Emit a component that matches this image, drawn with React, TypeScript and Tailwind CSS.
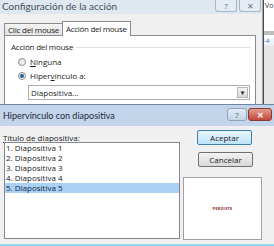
import { FC, ReactNode } from "react";

const slides = [
    "1. Diapositiva 1",
    "2. Diapositiva 2",
    "3. Diapositiva 3",
    "4. Diapositiva 4",
    "5. Diapositiva 5",
];

const Radio: FC<{ checked?: boolean }> = ({ checked }): ReactNode => (
    <span className="w-[8px] h-[8px] rounded-full border border-[#8e8f8f] bg-linear-to-br from-[#dcdcdc] to-[#fbfbfb] flex items-center justify-center">
        {checked && <span className="w-[4px] h-[4px] rounded-full bg-[#1f5f9e]" />}
    </span>
);

const App: FC = (): ReactNode => {
    return (
        <div className="relative w-[274px] h-[246px] overflow-hidden bg-white font-['Open_Sans','Liberation_Sans',sans-serif] text-[#1b1b1b]">
            {/* Window behind, right edge */}
            <div className="absolute left-[263px] top-0 w-[11px] h-[104px] bg-white border-l border-[#4a4a4a] flex flex-col">
                <span className="text-[7px] leading-[12px] pl-px text-[#333]">Vo</span>
                <div className="mt-[19px] h-[4px] bg-[#bdbdbd]" />
                <div className="mt-[3px] h-[7px] bg-[#eef4fb] text-[6px] leading-[7px] text-[#3a6aa8]">-4</div>
                <div className="flex-1 bg-[#e6e6e6]" />
            </div>

            {/* Back dialog: Configuración de la acción */}
            <div className="absolute left-0 top-0 w-[263px] h-[104px] bg-[#dfe7f0] border-r border-[#97a5b5] flex flex-col">
                <div className="h-[14px] flex items-start shrink-0">
                    <span className="pl-[2px] font-['Lato',sans-serif] text-[10px] leading-[13px] text-[#4a4f57]">Configuración de la acción</span>
                    <div className="ml-auto mr-[1px] flex gap-[2px]">
                        <div className="w-[22px] h-[12px] rounded-b-[3px] border border-t-0 border-[#a9b6c6] bg-[#e4ebf3] flex items-center justify-center text-[8px] leading-none text-[#6a7584]">?</div>
                        <div className="w-[22px] h-[12px] rounded-b-[3px] border border-t-0 border-[#a9b6c6] bg-[#e4ebf3] flex items-center justify-center text-[8px] leading-none text-[#6a7584]">✕</div>
                    </div>
                </div>
                <div className="flex-1 bg-[#f0f0f0] px-[4px] pt-[6px] flex flex-col">
                    {/* Tabs */}
                    <div className="flex items-end h-[15px]">
                        <div className="w-[59px] h-[12px] border border-b-0 border-[#898c95] bg-linear-to-b from-[#f4f4f4] to-[#e2e2e2] text-[8px] leading-[11px] pl-[3px] whitespace-nowrap tracking-[-0.2px]">
                            Clic del mouse
                        </div>
                        <div className="w-[69px] h-[15px] -ml-px border border-b-0 border-[#898c95] bg-white text-[8px] leading-[13px] pl-[3px] relative -mb-px z-10 whitespace-nowrap tracking-[-0.3px]">
                            Acción del mouse
                        </div>
                    </div>
                    {/* Panel */}
                    <div className="w-[252px] flex-1 border border-b-0 border-[#898c95] bg-white flex flex-col pl-[6px]">
                        <div className="mt-[6px] h-[10px] flex items-center">
                            <span className="text-[8px] leading-[10px] tracking-[-0.2px]">Acción del mouse</span>
                            <div className="ml-[3px] mr-[5px] flex-1 h-px bg-[#d5dfe5]" />
                        </div>
                        <div className="mt-[5px] h-[10px] flex items-center pl-[7px] gap-[4px]">
                            <Radio />
                            <span className="text-[8px] leading-[10px]">
                                <span className="underline">N</span>inguna
                            </span>
                        </div>
                        <div className="mt-[4px] h-[10px] flex items-center pl-[7px] gap-[4px]">
                            <Radio checked />
                            <span className="text-[8px] leading-[10px]">
                                Hiper<span className="underline">v</span>ínculo a:
                            </span>
                        </div>
                        <div className="mt-[4px] ml-[17px] w-[222px] h-[15px] border border-[#abadb3] bg-white flex items-center">
                            <span className="pl-[2px] text-[8px] leading-[13px]">Diapositiva...</span>
                            <div className="ml-auto mr-[1px] w-[11px] h-[11px] border border-[#b5b5b5] bg-linear-to-b from-[#f2f2f2] to-[#d8d8d8] flex items-center justify-center text-[6px] leading-none">
                                ▼
                            </div>
                        </div>
                    </div>
                </div>
            </div>

            {/* Front dialog: Hipervínculo con diapositiva */}
            <div className="absolute left-0 top-[104px] w-[274px] h-[142px] flex flex-col border-t border-[#6f86a3] bg-linear-to-b from-[#c2d4ea] to-[#cddcee]">
                <div className="h-[21px] flex items-start shrink-0">
                    <span className="pl-[3px] font-['Lato',sans-serif] text-[9px] leading-[21px] text-[#1e2a3a]">Hipervínculo con diapositiva</span>
                    <div className="ml-auto mr-[2px] mt-[3px] flex gap-px">
                        <div className="w-[20px] h-[13px] rounded-[3px] border border-[#8ea3bd] bg-linear-to-b from-[#e3ecf7] to-[#c4d4e8] flex items-center justify-center text-[8px] leading-none text-[#54657c]">?</div>
                        <div className="w-[24px] h-[13px] rounded-[3px] border border-[#8e3b33] bg-linear-to-b from-[#e39a8c] to-[#c4463a] flex items-center justify-center text-[8px] font-bold leading-none text-white">✕</div>
                    </div>
                </div>
                <div className="flex-1 bg-[#f0f0f0] flex">
                    {/* Slide list */}
                    <div className="w-[183px] pl-[3px] pt-[7px] flex flex-col shrink-0">
                        <span className="h-[9px] text-[8px] leading-[9px]">
                            <span className="underline">T</span>ítulo de diapositiva:
                        </span>
                        <div className="ml-px w-[176px] h-[97px] border border-[#828790] bg-white flex flex-col">
                            {slides.map((s, i) => (
                                <div
                                    key={s}
                                    className={
                                        i === 4
                                            ? "h-[10px] text-[8px] leading-[10px] pl-px bg-[#a9d1f5] text-[#10253f]"
                                            : "h-[10px] text-[8px] leading-[10px] pl-px"
                                    }
                                >
                                    {s}
                                </div>
                            ))}
                        </div>
                    </div>
                    {/* Buttons and preview */}
                    <div className="flex flex-col pt-[4px]">
                        <div className="ml-[14px] w-[55px] h-[15px] rounded-[2px] border border-[#3c7fb1] bg-linear-to-b from-[#eaf6fd] to-[#bee4f8] flex items-center justify-center text-[8px] leading-none">
                            Aceptar
                        </div>
                        <div className="ml-[15px] mt-[7px] w-[55px] h-[15px] rounded-[2px] border border-[#707070] bg-linear-to-b from-[#f3f3f3] to-[#d9d9d9] flex items-center justify-center text-[8px] leading-none">
                            Cancelar
                        </div>
                        <div className="mt-[10px] w-[79px] h-[63px] border border-[#a0a0a0] bg-white flex items-center justify-center">
                            <span className="text-[4px] font-bold leading-none tracking-[0.2px] text-[#8e2a2a]">PERDISTE</span>
                        </div>
                    </div>
                </div>
                <div className="h-[2px] bg-[#8fd9ec] shrink-0" />
            </div>
        </div>
    );
};

export default App;
